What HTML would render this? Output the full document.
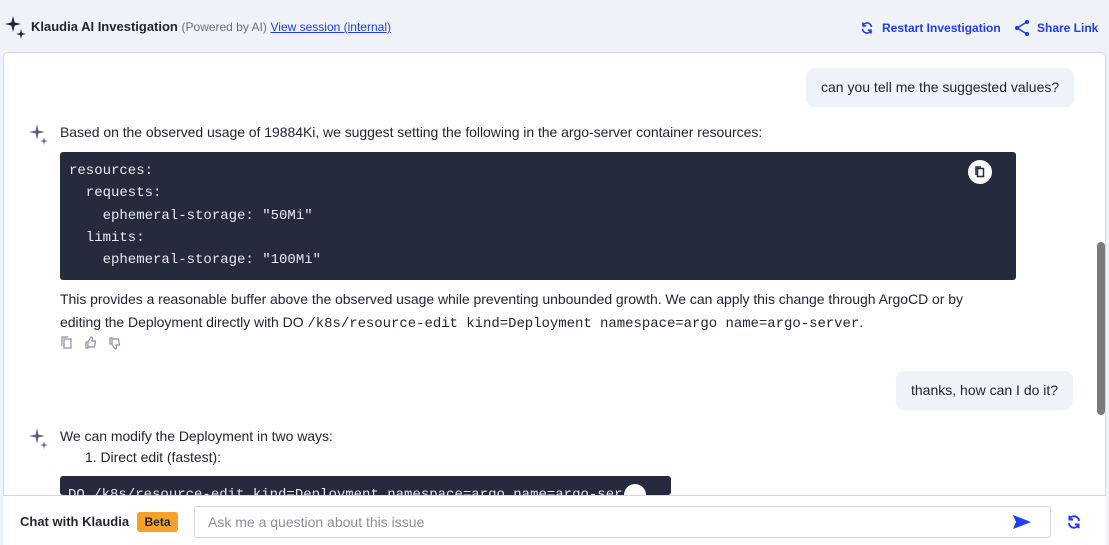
<!DOCTYPE html>
<html style="width:1109px;height:545px;overflow:hidden"><head><style>
*{box-sizing:border-box;margin:0;padding:0}
body{width:1109px;height:545px;background:#eff2f8;font-family:"Liberation Sans",sans-serif;position:relative;overflow:hidden;color:#1f2333}
.abs{position:absolute}
.panel{left:3px;top:52px;width:1103px;height:500px;background:#fff;border:1px solid #d3d7e0;border-radius:5px;overflow:hidden}
.code{background:#252a3d;border-radius:3px;color:#e8e9ee;font-family:"Liberation Mono",monospace;font-size:14px;white-space:pre}
.txt{font-size:14px;color:#1f2333;letter-spacing:-0.04px}
.bubble{background:#eff2f8;border-radius:8px;font-size:14px;color:#1f2333;padding:0 15px;line-height:39px}
.blue{color:#1f3df5;font-size:12px;font-weight:bold}
</style></head><body>
<svg class="abs" style="left:5px;top:16px" width="22" height="24" viewBox="0 0 22 24"><path d="M8 0 L9.6 6.4 L16 8 L9.6 9.6 L8 16 L6.4 9.6 L0 8 L6.4 6.4Z" fill="#1f2333"/><path d="M16 13 L17 17 L21 18 L17 19 L16 23 L15 19 L11 18 L15 17Z" fill="#1f2333"/></svg>
<div class="abs" style="left:31px;top:19px;font-size:13px;font-weight:bold;color:#1f2333">Klaudia AI Investigation <span style="font-weight:normal;color:#6b7080;font-size:12px">(Powered by AI)</span> <span style="font-weight:normal;color:#1f3df5;text-decoration:underline;font-size:12px">View session (internal)</span></div>
<svg class="abs" style="left:860px;top:21px" width="14" height="14" viewBox="0 0 14 14" fill="none" stroke="#1f3df5" stroke-width="1.6"><path d="M2.5 8A4.5 4.5 0 0 0 11 9.5M11.5 6A4.5 4.5 0 0 0 3 4.5"/><path d="M3 1.5V4.8H6.2M11 12.5V9.2H7.8"/></svg>
<div class="abs blue" style="left:882px;top:21px">Restart Investigation</div>
<svg class="abs" style="left:1015px;top:20px" width="14" height="16" viewBox="0 0 14 16" fill="none" stroke="#1f3df5" stroke-width="1.6"><path d="M12 2L2 8L12 14"/><circle cx="12" cy="2" r="1.3" fill="#1f3df5"/><circle cx="2" cy="8" r="1.3" fill="#1f3df5"/><circle cx="12" cy="14" r="1.3" fill="#1f3df5"/></svg>
<div class="abs blue" style="left:1037px;top:21px">Share Link</div>

<div class="abs panel"></div>
<div class="abs bubble" style="left:806px;top:68px">can you tell me the suggested values?</div>
<svg class="abs" style="left:29px;top:124px" width="22" height="22" viewBox="0 0 22 22"><path d="M8 0 L9.4 6.6 L16 8 L9.4 9.4 L8 16 L6.6 9.4 L0 8 L6.6 6.6Z" fill="#5a5f85"/><path d="M15 13 L15.8 16.2 L19 17 L15.8 17.8 L15 21 L14.2 17.8 L11 17 L14.2 16.2Z" fill="#5a5f85"/></svg>
<div class="abs txt" style="left:60px;top:124px">Based on the observed usage of 19884Ki, we suggest setting the following in the argo-server container resources:</div>
<div class="abs code" style="left:60px;top:152px;width:956px;height:128px;padding:8px 9px;line-height:22.3px">resources:
  requests:
    ephemeral-storage: "50Mi"
  limits:
    ephemeral-storage: "100Mi"</div>
<div class="abs" style="left:968px;top:160px;width:24px;height:24px;border-radius:50%;background:#fff"><svg width="24" height="24" viewBox="0 0 24 24" fill="none" stroke="#252a3d" stroke-width="1.5"><rect x="9.5" y="8.5" width="6" height="8"/><path d="M8 15V7H13"/></svg></div>
<div class="abs txt" style="left:60px;top:288px;line-height:23px">This provides a reasonable buffer above the observed usage while preventing unbounded growth. We can apply this change through ArgoCD or by<br>editing the Deployment directly with DO <span style="font-family:'Liberation Mono',monospace">/k8s/resource-edit kind=Deployment namespace=argo name=argo-server</span>.</div>
<svg class="abs" style="left:60px;top:336px" width="66" height="14" viewBox="0 0 66 14" fill="none" stroke="#8a8f9c" stroke-width="1.2"><rect x="4" y="3" width="7" height="9"/><path d="M2 10V1H8"/><path d="M26 6h2v6h-2zM28 6l3-5c1 0 1.5.5 1.5 1.5L32 5h3.5l-1 6H28"/><path d="M50 8h2V2h-2zM52 8l3 5c1 0 1.5-.5 1.5-1.5L56 9h3.5l-1-6H52"/></svg>
<div class="abs bubble" style="left:896px;top:371px">thanks, how can I do it?</div>
<svg class="abs" style="left:29px;top:428px" width="22" height="22" viewBox="0 0 22 22"><path d="M8 0 L9.4 6.6 L16 8 L9.4 9.4 L8 16 L6.6 9.4 L0 8 L6.6 6.6Z" fill="#5a5f85"/><path d="M15 13 L15.8 16.2 L19 17 L15.8 17.8 L15 21 L14.2 17.8 L11 17 L14.2 16.2Z" fill="#5a5f85"/></svg>
<div class="abs txt" style="left:60px;top:428px">We can modify the Deployment in two ways:</div>
<div class="abs txt" style="left:85px;top:449px">1. Direct edit (fastest):</div>
<div class="abs code" style="left:60px;top:476px;width:611px;height:19px;padding:8px 8px;line-height:22px;overflow:hidden">DO /k8s/resource-edit kind=Deployment namespace=argo name=argo-ser</div>
<div class="abs" style="left:624px;top:484px;width:22px;height:11px;border-radius:11px 11px 0 0;background:#fff"></div>
<div class="abs" style="left:1097px;top:242px;width:8px;height:173px;background:#7b7b7b;border-radius:4px"></div>

<div class="abs" style="left:3px;top:495px;width:1103px;height:50px;background:#fff;border-top:1px solid #d3d7e0"></div>
<div class="abs" style="left:20px;top:514px;font-size:13px;font-weight:bold;color:#1f2333">Chat with Klaudia</div>
<div class="abs" style="left:137px;top:512px;width:41px;height:20px;background:#f7a02b;border-radius:3px;font-size:12px;font-weight:bold;text-align:center;line-height:20px;color:#1f2333">Beta</div>
<div class="abs" style="left:194px;top:506px;width:857px;height:32px;border:1px solid #d3d7e0;border-radius:3px;font-size:14px;color:#8a8f9c;padding-left:13px;line-height:31px">Ask me a question about this issue</div>
<svg class="abs" style="left:1013px;top:514px" width="18" height="16" viewBox="0 0 18 16"><path d="M0 1L18 8L0 15L3 8Z" fill="#1f3df5"/></svg>
<svg class="abs" style="left:1066px;top:514px" width="16" height="16" viewBox="0 0 14 14" fill="none" stroke="#1f3df5" stroke-width="1.7"><path d="M2.5 8A4.5 4.5 0 0 0 11 9.5M11.5 6A4.5 4.5 0 0 0 3 4.5"/><path d="M3 1.5V4.8H6.2M11 12.5V9.2H7.8"/></svg>
</body></html>
